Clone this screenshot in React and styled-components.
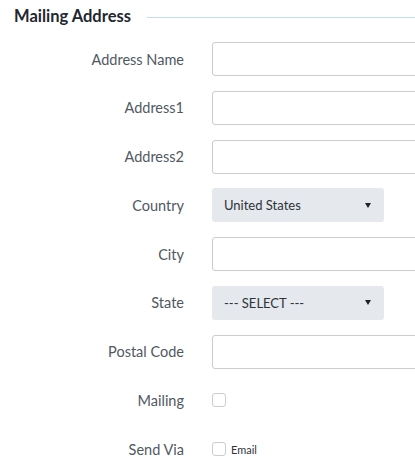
import React from "react";
import styled, { createGlobalStyle } from "styled-components";

const Global = createGlobalStyle`
  html, body { margin: 0; padding: 0; background: #fff; overflow: hidden; }
  body { font-family: Lato, "Noto Sans", "Liberation Sans", sans-serif; }
  * { box-sizing: border-box; }
`;

const Page = styled.div`
  width: 415px;
  height: 469px;
  padding: 4px 0 0 14px;
  overflow: hidden;
`;

const Header = styled.div`
  display: flex;
  align-items: center;
  gap: 16px;
  height: 24px;
  margin-bottom: 14px;
`;

const Title = styled.h3`
  margin: 0;
  font-size: 16.5px;
  font-weight: 700;
  color: #1f2730;
  white-space: nowrap;
`;

const Rule = styled.div`
  flex: 1;
  height: 1px;
  background: #c6dbf4;
  margin-top: 3px;
`;

const Form = styled.div`
  display: grid;
  grid-template-columns: 170px 1fr;
  column-gap: 28px;
  row-gap: 14.75px;
`;

const Label = styled.label`
  height: 34px;
  display: flex;
  align-items: center;
  justify-content: flex-end;
  font-size: 14.5px;
  color: #505862;
  white-space: nowrap;
`;

const Input = styled.input`
  width: 300px;
  height: 34px;
  border: 1px solid #cccccc;
  border-radius: 3px;
  background: #fff;
  padding: 0 10px;
  font: inherit;
`;

const Select = styled.div`
  width: 172px;
  height: 34px;
  border-radius: 3px;
  background: #e5e8ec;
  display: flex;
  align-items: center;
  justify-content: space-between;
  padding: 0 12px 0 12px;
  font-size: 13px;
  color: #2d333a;
`;

const Caret = styled.span`
  width: 0;
  height: 0;
  border-left: 3.5px solid transparent;
  border-right: 3.5px solid transparent;
  border-top: 5px solid #222;
  margin-right: 1px;
`;

const CheckRow = styled.div`
  height: 34px;
  display: flex;
  align-items: center;
  gap: 5px;
  font-size: 11px;
  color: #2d333a;
`;

const Box = styled.span`
  width: 14px;
  height: 14px;
  border: 1px solid #c9ced4;
  border-radius: 3px;
  background: #fff;
`;

export default function App() {
  return (
    <Page>
      <Global />
      <Header>
        <Title>Mailing Address</Title>
        <Rule />
      </Header>
      <Form>
        <Label>Address Name</Label>
        <Input />
        <Label>Address1</Label>
        <Input />
        <Label>Address2</Label>
        <Input />
        <Label>Country</Label>
        <Select>
          <span>United States</span>
          <Caret />
        </Select>
        <Label>City</Label>
        <Input />
        <Label>State</Label>
        <Select>
          <span>--- SELECT ---</span>
          <Caret />
        </Select>
        <Label>Postal Code</Label>
        <Input />
        <Label>Mailing</Label>
        <CheckRow>
          <Box />
        </CheckRow>
        <Label>Send Via</Label>
        <CheckRow>
          <Box />
          <span>Email</span>
        </CheckRow>
      </Form>
    </Page>
  );
}
